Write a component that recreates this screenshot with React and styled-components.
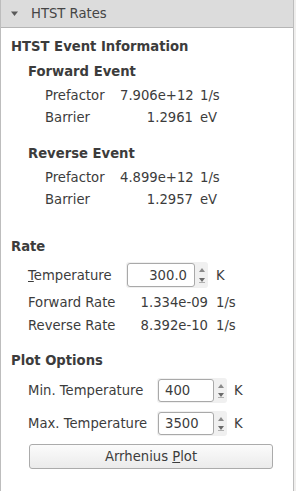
import React from 'react';
import styled, { createGlobalStyle } from 'styled-components';

const GlobalStyle = createGlobalStyle`
  body {
    margin: 0;
    background: #efeeed;
    font-family: "DejaVu Sans", Verdana, sans-serif;
    font-size: 13.2px;
    color: #3c3c3c;
  }
`;

const Panel = styled.div`
  width: 292px;
  height: 491px;
  border-left: 1px solid #bdbdbd;
  border-right: 1px solid #bdbdbd;
  background: #ffffff;
  box-sizing: content-box;
  display: flex;
  flex-direction: column;
`;

const Header = styled.div`
  height: 27px;
  border-bottom: 1px solid #b5b5b5;
  background: #dcdcdc;
  display: flex;
  align-items: center;
  gap: 13px;
  padding-left: 10px;
  color: #454545;
`;

const Arrow = styled.svg`
  width: 7px;
  height: 7px;
`;

const Title = styled.div`
  font-weight: bold;
  height: 20px;
  line-height: 20px;
  margin-top: ${(p) => p.top}px;
  padding-left: ${(p) => p.indent}px;
`;

const Row = styled.div`
  display: grid;
  grid-template-columns: ${(p) => p.cols};
  align-items: center;
  height: ${(p) => p.h}px;
  margin-top: ${(p) => p.top}px;
  padding-left: ${(p) => p.indent}px;
  white-space: nowrap;
`;

const Value = styled.span`
  text-align: right;
`;

const Unit = styled.span`
  padding-left: ${(p) => p.gap}px;
`;

const SpinFrame = styled.div`
  display: flex;
  height: ${(p) => p.h}px;
  background: #f0f0f0;
  border-radius: 3px;
  box-sizing: border-box;
  padding: 1px 0 1px 1px;
`;

const SpinField = styled.div`
  flex: 1;
  background: #ffffff;
  border: 1px solid #a9a9a9;
  border-radius: 3px;
  display: flex;
  align-items: center;
  justify-content: ${(p) => (p.right ? 'flex-end' : 'flex-start')};
  padding: 0 7px 0 6px;
`;

const SpinArrows = styled.div`
  width: 13px;
  display: flex;
  flex-direction: column;
  align-items: center;
  justify-content: space-between;
  padding: 5px 0 4px;
`;

const Button = styled.div`
  margin: 8px 0 0 28px;
  width: 244px;
  height: 25px;
  box-sizing: border-box;
  border: 1px solid #ababab;
  border-radius: 3px;
  background: linear-gradient(#fbfbfb, #ebebeb);
  display: flex;
  align-items: center;
  justify-content: center;
  color: #3c3c3c;
`;

function Spin({ value, h, right }) {
  return (
    <SpinFrame h={h}>
      <SpinField right={right}>{value}</SpinField>
      <SpinArrows>
        <svg width="6" height="4" viewBox="0 0 6 4">
          <path d="M0 4 L3 0 L6 4 Z" fill="#8a8a8a" />
        </svg>
        <svg width="6" height="5" viewBox="0 0 6 5">
          <path d="M0 0 L3 4 L6 0 Z" fill="#6a6a6a" />
          <rect x="0" y="4" width="6" height="1" fill="#b0b0b0" />
        </svg>
      </SpinArrows>
    </SpinFrame>
  );
}

const eventCols = '75px 73px auto';

function EventBlock({ title, top, prefactor, barrier }) {
  return (
    <>
      <Title top={top} indent={27}>{title}</Title>
      <Row cols={eventCols} h={22} top={2} indent={44}>
        <span>Prefactor</span>
        <Value>{prefactor}</Value>
        <Unit gap={7}>1/s</Unit>
      </Row>
      <Row cols={eventCols} h={22} top={0} indent={44}>
        <span>Barrier</span>
        <Value>{barrier}</Value>
        <Unit gap={7}>eV</Unit>
      </Row>
    </>
  );
}

export default function App() {
  return (
    <>
      <GlobalStyle />
      <Panel>
        <Header>
          <Arrow viewBox="0 0 7 7">
            <path d="M0 1.5 L7 1.5 L3.5 6 Z" fill="#5a5a5a" />
          </Arrow>
          <span>HTST Rates</span>
        </Header>

        <Title top={9} indent={10}>HTST Event Information</Title>
        <EventBlock title="Forward Event" top={5} prefactor="7.906e+12" barrier="1.2961" />
        <EventBlock title="Reverse Event" top={16} prefactor="4.899e+12" barrier="1.2957" />

        <Title top={27} indent={10}>Rate</Title>
        <Row cols="98px 82px auto" h={26} top={5} indent={27}>
          <span><u>T</u>emperature</span>
          <Spin value="300.0" h={26} right />
          <Unit gap={8}>K</Unit>
        </Row>
        <Row cols="98px 82px auto" h={23} top={3} indent={27}>
          <span>Forward Rate</span>
          <Value>1.334e-09</Value>
          <Unit gap={8}>1/s</Unit>
        </Row>
        <Row cols="98px 82px auto" h={23} top={0} indent={27}>
          <span>Reverse Rate</span>
          <Value>8.392e-10</Value>
          <Unit gap={8}>1/s</Unit>
        </Row>

        <Title top={14} indent={10}>Plot Options</Title>
        <Row cols="129px 70px auto" h={25} top={7} indent={27}>
          <span>Min. Temperature</span>
          <Spin value="400" h={25} />
          <Unit gap={7}>K</Unit>
        </Row>
        <Row cols="129px 70px auto" h={25} top={8} indent={27}>
          <span>Max. Temperature</span>
          <Spin value="3500" h={25} />
          <Unit gap={7}>K</Unit>
        </Row>
        <Button>
          Arrhenius&nbsp;<u>P</u>lot
        </Button>
      </Panel>
    </>
  );
}
